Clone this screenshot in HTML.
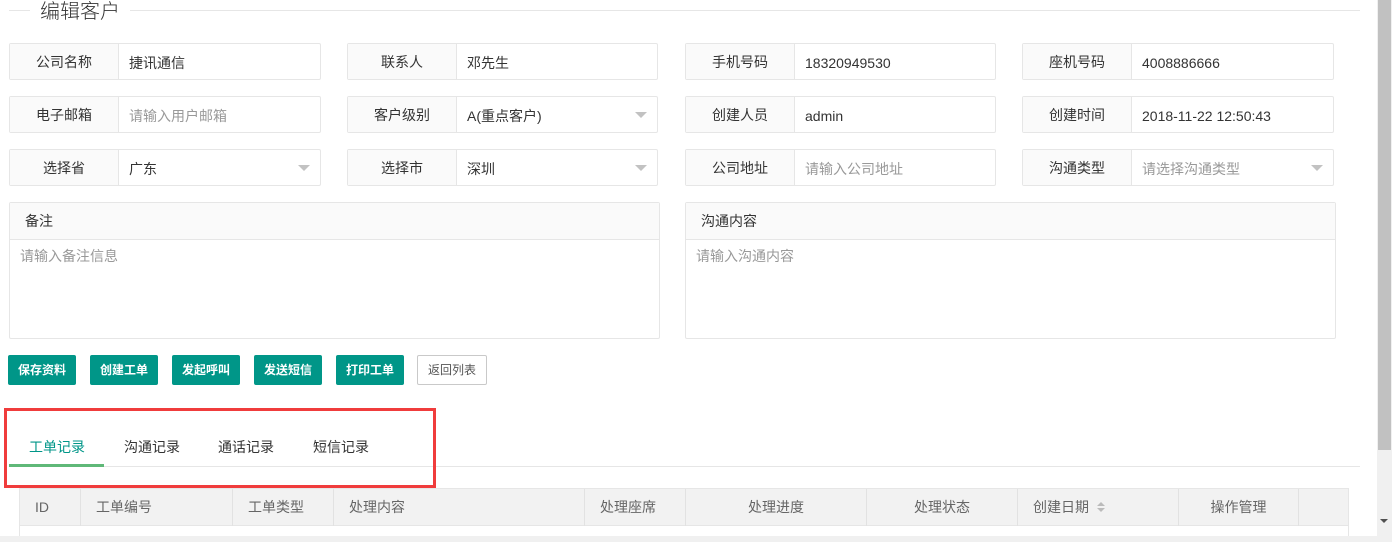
<!DOCTYPE html><html><head><meta charset="utf-8"><style>
*{box-sizing:border-box;margin:0;padding:0}
body{width:1392px;height:542px;overflow:hidden;background:#fff;font-family:"Liberation Sans","Noto Sans CJK SC",sans-serif;font-size:14px;color:#333;position:relative}
.a{position:absolute}
.f{position:absolute;height:37px;border:1px solid #e6e6e6;border-radius:2px;background:#fff}
.f .l{position:absolute;left:0;top:0;width:109px;height:35px;background:#fafafa;border-right:1px solid #e6e6e6;text-align:center;line-height:37px}
.f .v{position:absolute;left:119px;top:2px;line-height:35px}
.ph{color:#999}
.f .tri{position:absolute;right:10px;top:15px;border:6px solid transparent;border-top:6px solid #c2c2c2;border-bottom:0}
.ta{position:absolute;border:1px solid #e6e6e6;border-radius:2px}
.ta .h{height:37px;background:#fafafa;border-bottom:1px solid #e6e6e6;line-height:37px;padding-left:15px}
.ta .p{padding:6px 10px;color:#999;font-size:14px}
.b{position:absolute;top:355px;height:30px;width:68px;background:#009688;color:#fff;border-radius:2px;font-size:12px;font-weight:bold;text-align:center;line-height:30px}
.th{position:absolute;top:1px;height:37px;line-height:37px;color:#666;border-right:1px solid #e2e2e2}
</style></head><body>
<div class="a" style="left:9px;top:10px;width:1351px;height:1px;background:#e6e6e6"></div>
<div class="a" style="left:30px;top:0px;background:#fff;padding:0 10px;font-size:20px;line-height:24px;color:#333;font-weight:300">编辑客户</div>

<div class="f" style="left:9px;top:43px;width:312px"><div class="l">公司名称</div><div class="v">捷讯通信</div></div>
<div class="f" style="left:347px;top:43px;width:311px"><div class="l">联系人</div><div class="v">邓先生</div></div>
<div class="f" style="left:685px;top:43px;width:311px"><div class="l">手机号码</div><div class="v">18320949530</div></div>
<div class="f" style="left:1022px;top:43px;width:312px"><div class="l">座机号码</div><div class="v">4008886666</div></div>

<div class="f" style="left:9px;top:96px;width:312px"><div class="l">电子邮箱</div><div class="v ph">请输入用户邮箱</div></div>
<div class="f" style="left:347px;top:96px;width:311px"><div class="l">客户级别</div><div class="v">A(重点客户)</div><div class="tri"></div></div>
<div class="f" style="left:685px;top:96px;width:311px"><div class="l">创建人员</div><div class="v">admin</div></div>
<div class="f" style="left:1022px;top:96px;width:312px"><div class="l">创建时间</div><div class="v">2018-11-22 12:50:43</div></div>

<div class="f" style="left:9px;top:149px;width:312px"><div class="l">选择省</div><div class="v">广东</div><div class="tri"></div></div>
<div class="f" style="left:347px;top:149px;width:311px"><div class="l">选择市</div><div class="v">深圳</div><div class="tri"></div></div>
<div class="f" style="left:685px;top:149px;width:311px"><div class="l">公司地址</div><div class="v ph">请输入公司地址</div></div>
<div class="f" style="left:1022px;top:149px;width:312px"><div class="l">沟通类型</div><div class="v ph">请选择沟通类型</div><div class="tri"></div></div>

<div class="ta" style="left:9px;top:202px;width:651px;height:137px"><div class="h">备注</div><div class="p">请输入备注信息</div></div>
<div class="ta" style="left:685px;top:202px;width:651px;height:137px"><div class="h">沟通内容</div><div class="p">请输入沟通内容</div></div>

<div class="b" style="left:8px">保存资料</div>
<div class="b" style="left:90px">创建工单</div>
<div class="b" style="left:172px">发起呼叫</div>
<div class="b" style="left:254px">发送短信</div>
<div class="b" style="left:336px">打印工单</div>
<div class="a" style="left:417px;top:355px;width:70px;height:30px;border:1px solid #c9c9c9;border-radius:2px;font-size:12px;color:#555;text-align:center;line-height:28px">返回列表</div>

<div class="a" style="left:9px;top:466px;width:1351px;height:1px;background:#e6e6e6"></div>
<div class="a" style="left:9px;top:464px;width:95px;height:3px;background:#5FB878"></div>
<div class="a" style="left:29px;top:437px;color:#009688">工单记录</div>
<div class="a" style="left:124px;top:437px;color:#333">沟通记录</div>
<div class="a" style="left:218px;top:437px;color:#333">通话记录</div>
<div class="a" style="left:313px;top:437px;color:#333">短信记录</div>
<div class="a" style="left:4px;top:408px;width:432px;height:80px;border:3px solid #f03c3c"></div>

<div class="a" style="left:19px;top:488px;width:1330px;height:50px;border-left:1px solid #e6e6e6;border-right:1px solid #e6e6e6">
<div class="a" style="left:0;top:0;width:1328px;height:38px;background:#f2f2f2;border-top:1px solid #e6e6e6;border-bottom:1px solid #e6e6e6"></div>
<div class="th" style="left:0;width:61px;padding-left:15px">ID</div>
<div class="th" style="left:61px;width:152px;padding-left:15px">工单编号</div>
<div class="th" style="left:213px;width:101px;padding-left:15px">工单类型</div>
<div class="th" style="left:314px;width:251px;padding-left:15px">处理内容</div>
<div class="th" style="left:565px;width:101px;padding-left:15px">处理座席</div>
<div class="th" style="left:666px;width:181px;text-align:center">处理进度</div>
<div class="th" style="left:847px;width:151px;text-align:center">处理状态</div>
<div class="th" style="left:998px;width:161px;padding-left:15px">创建日期 <svg width="10" height="12" viewBox="0 0 10 12" style="vertical-align:-1px;margin-left:3px"><path d="M5 1L9 5H1Z M5 11L9 7H1Z" fill="#bbb"/></svg></div>
<div class="th" style="left:1159px;width:120px;text-align:center">操作管理</div>
</div>

<div class="a" style="left:0;top:536px;width:1377px;height:6px;background:#f0f0f0"></div>
<div class="a" style="left:1377px;top:0;width:15px;height:542px;background:#f0f0f0"></div>
<div class="a" style="left:1378px;top:0;width:13px;height:450px;background:#c1c1c1"></div>
<div class="a" style="left:1380px;top:519px;border:4px solid transparent;border-top:4px solid #505050"></div>
</body></html>
